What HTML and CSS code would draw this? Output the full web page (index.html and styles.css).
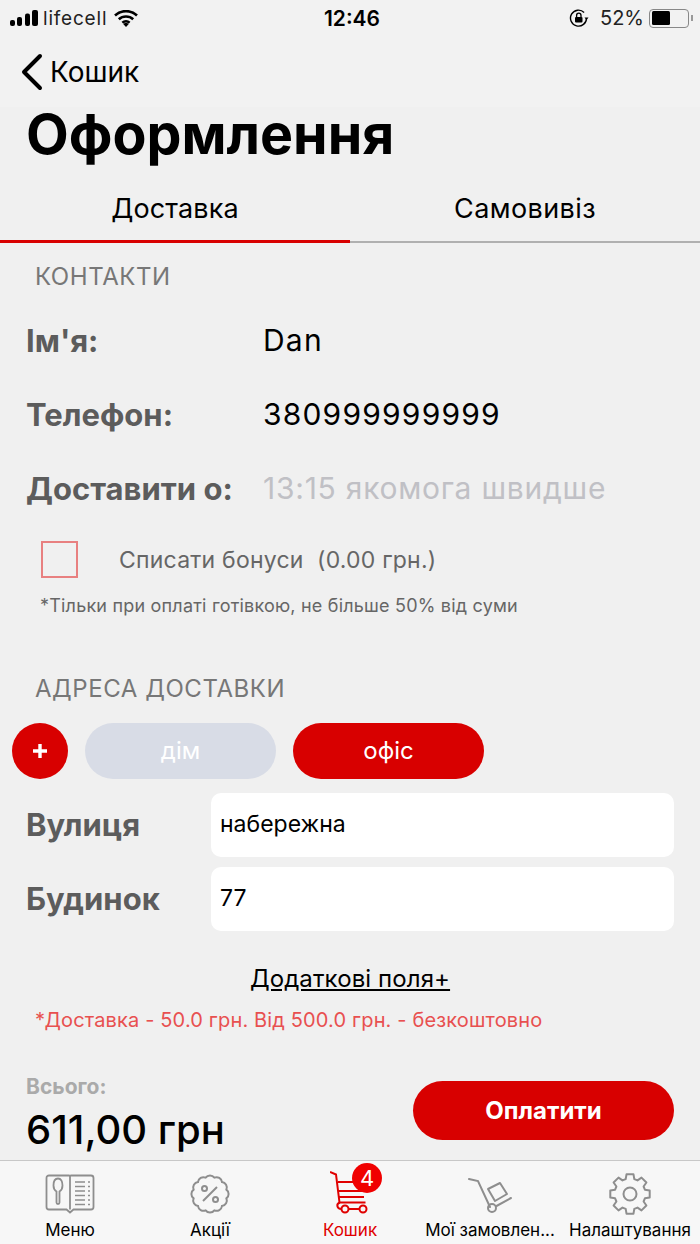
FILE: index.html
```html
<!DOCTYPE html>
<html lang="uk">
<head>
  <meta charset="UTF-8">
  <meta name="viewport" content="width=device-width, initial-scale=1.0">
  <title>Оформлення</title>
  <link rel="stylesheet" href="styles.css">
</head>
<body>
  <!-- Status bar -->
  <div class="status">
    <div class="status-left">
      <svg width="29" height="16" viewBox="0 0 29 16"><rect x="0" y="10" width="5" height="6" rx="2"/><rect x="7" y="7" width="5" height="9" rx="2"/><rect x="15" y="3.5" width="5" height="12.5" rx="2"/><rect x="22" y="0" width="6" height="16" rx="2"/></svg>
      <span class="carrier">lifecell</span>
      <svg class="wifi" width="24" height="17" viewBox="0 0 24 17"><path d="M1 5.5a16 16 0 0 1 22 0M4.8 9.3a10.6 10.6 0 0 1 14.4 0M8.4 12.8a5.4 5.4 0 0 1 7.2 0" fill="none" stroke="#000" stroke-width="2.6"/><path d="M12 17l-2.6-2.8a3.6 3.6 0 0 1 5.2 0z"/></svg>
    </div>
    <div class="status-time">12:46</div>
    <div class="status-right">
      <svg width="20" height="20" viewBox="0 0 20 20"><path d="M17.5 10a8 8 0 1 1-2.4-5.6" fill="none" stroke="#000" stroke-width="1.4"/><path d="M19.5 9.5h-4l2 2.4z"/><rect x="6" y="9" width="7.5" height="5.6" rx="1"/><path d="M7.6 9V7.4a2.2 2.2 0 0 1 4.4 0V9" fill="none" stroke="#000" stroke-width="1.3"/></svg>
      <span class="percent">52%</span>
      <div class="battery"><div class="battery-fill"></div></div>
      <div class="battery-tip"></div>
    </div>
  </div>

  <!-- Nav -->
  <div class="nav">
    <svg width="24" height="38" viewBox="0 0 24 38"><path d="M20 3L4 19l16 16" fill="none" stroke="#000" stroke-width="4" stroke-linecap="round" stroke-linejoin="round"/></svg>
    <span>Кошик</span>
  </div>

  <h1>Оформлення</h1>

  <div class="tabs">
    <div class="tab active">Доставка</div>
    <div class="tab">Самовивіз</div>
  </div>

  <div class="section-title first">КОНТАКТИ</div>
  <div class="info-rows">
    <div class="info-row"><div class="info-label">Ім'я:</div><div class="info-value">Dan</div></div>
    <div class="info-row"><div class="info-label">Телефон:</div><div class="info-value">380999999999</div></div>
    <div class="info-row"><div class="info-label">Доставити о:</div><div class="info-value muted">13:15 якомога швидше</div></div>
  </div>

  <div class="bonus">
    <div class="checkbox"></div>
    <div class="bonus-text">Списати бонуси&nbsp; (0.00 грн.)</div>
  </div>
  <div class="note">*Тільки при оплаті готівкою, не більше 50% від суми</div>

  <div class="section-title">АДРЕСА ДОСТАВКИ</div>
  <div class="pills">
    <div class="plus">
      <svg width="16" height="16" viewBox="0 0 16 16"><path d="M8 1v14M1 8h14" stroke="#fff" stroke-width="3.4"/></svg>
    </div>
    <div class="pill">дім</div>
    <div class="pill active">офіс</div>
  </div>

  <div class="field"><div class="field-label">Вулиця</div><div class="field-input">набережна</div></div>
  <div class="field"><div class="field-label">Будинок</div><div class="field-input">77</div></div>

  <div class="more"><a href="#">Додаткові поля+</a></div>
  <div class="delivery">*Доставка - 50.0 грн. Від 500.0 грн. - безкоштовно</div>

  <div class="total">
    <div>
      <div class="total-label">Всього:</div>
      <div class="total-sum">611,00 грн</div>
    </div>
    <button class="pay">Оплатити</button>
  </div>

  <!-- Tab bar -->
  <div class="tabbar">
    <div class="tabbar-item">
      <svg width="50" height="44" viewBox="0 0 50 44" fill="none" stroke="#8e8e8e" stroke-width="1.8"><path d="M24 4.500H4a2.500 2.500 0 0 0-2.500 2.500v29a2.500 2.500 0 0 0 2.500 2.500h17.500l3.500 3 3.500-3H46a2.500 2.500 0 0 0 2.500-2.500V7A2.500 2.500 0 0 0 46 4.500H26a1 1 0 0 0-1 1v33M25 5.500a1 1 0 0 0-1-1"/><path d="M13 7.500c-3 0-4.500 3-4.500 7 0 3 1.500 5 3 6v11a1.500 1.500 0 0 0 3 0v-11c1.500-1 3-3 3-6 0-4-1.500-7-4.500-7z"/><path d="M30 11h10M30 15.500h10M30 20h10M30 24.500h10M30 29h10M30 33.500h10M43 11h2M43 15.500h2M43 20h2M43 24.500h2M43 29h2M43 33.500h2" stroke-width="1.500"/></svg>
      <span>Меню</span>
    </div>
    <div class="tabbar-item">
      <svg width="40" height="42" viewBox="0 0 40 42" fill="none" stroke="#8e8e8e" stroke-width="2"><path d="M24.400 4.600A5.500 5.500 0 0 1 32 9A5.500 5.500 0 0 1 36.400 16.600A5.500 5.500 0 0 1 36.400 25.400A5.500 5.500 0 0 1 32 33A5.500 5.500 0 0 1 24.400 37.400A5.500 5.500 0 0 1 15.600 37.400A5.500 5.500 0 0 1 8 33A5.500 5.500 0 0 1 3.600 25.400A5.500 5.500 0 0 1 3.600 16.600A5.500 5.500 0 0 1 8 9A5.500 5.500 0 0 1 15.600 4.600A5.500 5.500 0 0 1 24.400 4.600z"/><path d="M13 28l14-14"/><circle cx="14.500" cy="15.500" r="2.500"/><circle cx="25.500" cy="26.500" r="2.500"/></svg>
      <span>Акції</span>
    </div>
    <div class="tabbar-item active">
      <div class="cart">
        <svg width="40" height="44" viewBox="0 0 40 44" fill="none" stroke="#e00000" stroke-width="2"><path d="M0 1l6 2.500 3.500 28h26"/><path d="M8 11h30M8.500 20h28M9 26h25"/><circle cx="15" cy="38" r="3.500"/><circle cx="33" cy="38" r="3.500"/><path d="M10 31.500c-4 1-3.500 6.500 1.500 6.500M18.500 38h11"/></svg>
        <div class="badge">4</div>
      </div>
      <span>Кошик</span>
    </div>
    <div class="tabbar-item">
      <svg width="44" height="42" viewBox="0 0 44 42" fill="none" stroke="#8e8e8e" stroke-width="2"><path d="M1 6l9 2 12 26" stroke-linecap="round"/><circle cx="24" cy="35" r="4"/><path d="M28.500 33l14.500-8" stroke-linecap="round"/><path d="M20 16l12-6 7 11-12 7z" stroke-linejoin="round"/></svg>
      <span>Мої замовлен...</span>
    </div>
    <div class="tabbar-item">
      <svg width="42" height="42" viewBox="0 0 42 42" fill="none" stroke="#8e8e8e" stroke-width="2"><path d="M17.500 1.300h7l.8 4.800 3.200 1.300 4-2.800 4.900 4.900-2.800 4 1.300 3.200 4.800.8v7l-4.800.8-1.300 3.200 2.800 4-4.900 4.900-4-2.800-3.200 1.300-.8 4.800h-7l-.8-4.800-3.200-1.300-4 2.800-4.900-4.900 2.800-4-1.300-3.200-4.800-.8v-7l4.800-.8 1.300-3.200-2.800-4 4.900-4.900 4 2.800 3.200-1.300z" stroke-linejoin="round"/><circle cx="21" cy="21" r="6.500"/></svg>
      <span>Налаштування</span>
    </div>
  </div>
</body>
</html>
```

FILE: styles.css
```css
body {
  margin: 0;
  padding: 0;
  width: 700px;
  height: 1244px;
  overflow: hidden;
  background-color: #f0f0f0;
  color: #000;
  font-family: 'Inter', 'Liberation Sans', sans-serif;
  display: flex;
  flex-direction: column;
}

/* Status bar */
.status {
  height: 36px;
  display: flex;
  justify-content: space-between;
  align-items: center;
  padding: 0 7px 0 10px;
  background: #f2f2f2;
}
.status-left, .status-right {
  display: flex;
  align-items: center;
  width: 190px;
}
.status-right { justify-content: flex-end; }
.carrier {
  font-size: 19px;
  letter-spacing: 0.8px;
  color: #222;
  margin: 0 7px 0 4px;
}
.status-time {
  font-size: 21px;
  font-weight: 600;
  padding-left: 1px;
}
.percent {
  font-size: 20px;
  color: #222;
  margin: 0 5px 0 11px;
}
.battery {
  width: 35px;
  height: 14px;
  border: 1.5px solid #888;
  border-radius: 4px;
  padding: 1.5px;
}
.battery-fill {
  width: 18px;
  height: 100%;
  background: #000;
  border-radius: 1.5px;
}
.battery-tip {
  width: 2px;
  height: 6px;
  background: #999;
  margin-left: 2px;
}

/* Nav */
.nav {
  height: 71px;
  display: flex;
  align-items: center;
  padding-left: 20px;
  gap: 6px;
  font-size: 28px;
  background: #f2f2f2;
}

h1 {
  margin: 0;
  padding-left: 26px;
  height: 68px;
  line-height: 54px;
  font-size: 55.5px;
  font-weight: 700;
}

/* Tabs */
.tabs { display: flex; }
.tab {
  flex: 1;
  height: 66px;
  line-height: 68px;
  text-align: center;
  font-size: 27px;
  letter-spacing: 0.4px;
  border-bottom: 2px solid #b0b0b0;
}
.tab.active {
  height: 65px;
  letter-spacing: 0.1px;
  border-bottom: 3px solid #d80000;
}

.section-title {
  padding-left: 35px;
  margin-top: 57px;
  font-size: 24px;
  letter-spacing: 0.55px;
  line-height: 30px;
  color: #777;
}
.section-title.first { margin-top: 19px; }

/* Contacts */
.info-rows { margin-top: 11px; }
.info-row {
  display: flex;
  align-items: center;
  height: 74px;
  padding-left: 26px;
  font-size: 31px;
}
.info-label {
  width: 237px;
  font-weight: 700;
  color: #5c5c5c;
}
.info-value {
  font-size: 30px;
  letter-spacing: 1.2px;
}
.info-value.muted {
  letter-spacing: 0.75px;
  color: #c0c0c5;
}

.bonus {
  display: flex;
  align-items: center;
  padding-left: 41px;
  margin-top: 16px;
}
.checkbox {
  width: 33px;
  height: 33px;
  border: 2px solid #e88080;
}
.bonus-text {
  margin-left: 41px;
  font-size: 23px;
  letter-spacing: 0.22px;
  color: #666;
}
.note {
  padding-left: 40px;
  margin-top: 17px;
  font-size: 18px;
  letter-spacing: 0.2px;
  line-height: 22px;
  color: #666;
}

/* Address */
.pills {
  display: flex;
  gap: 17px;
  padding-left: 12px;
  margin-top: 19px;
}
.plus {
  width: 56px;
  height: 56px;
  border-radius: 50%;
  background: #d80000;
  display: flex;
  align-items: center;
  justify-content: center;
}
.pill {
  width: 191px;
  height: 56px;
  line-height: 56px;
  border-radius: 28px;
  background: #d8dce6;
  color: #fff;
  text-align: center;
  font-size: 24px;
}
.pill.active { background: #d80000; }

.field {
  display: flex;
  align-items: center;
  padding: 0 26px;
  margin-top: 10px;
}
.pills + .field { margin-top: 14px; }
.field-label {
  width: 185px;
  padding-bottom: 2px;
  font-size: 31px;
  font-weight: 700;
  color: #5c5c5c;
}
.field-input {
  flex: 1;
  height: 64px;
  line-height: 62px;
  padding-left: 9px;
  background: #fff;
  border-radius: 10px;
  font-size: 23px;
}

.more {
  text-align: center;
  margin-top: 33px;
  font-size: 24px;
  letter-spacing: 0.1px;
  line-height: 30px;
}
.more a { color: #000; }
.delivery {
  padding-left: 35px;
  margin-top: 14px;
  font-size: 20px;
  letter-spacing: 0.15px;
  line-height: 24px;
  color: #e85050;
}

/* Total */
.total {
  display: flex;
  justify-content: space-between;
  align-items: flex-start;
  padding: 0 26px;
  margin-top: 43px;
}
.total-label {
  font-size: 21px;
  font-weight: 700;
  line-height: 24px;
  color: #aaa;
}
.total-sum {
  margin-top: 8px;
  font-size: 40px;
  font-weight: 500;
  line-height: 46px;
}
.pay {
  width: 261px;
  height: 59px;
  margin-top: 6px;
  border: none;
  border-radius: 30px;
  background: #d80000;
  color: #fff;
  font-family: inherit;
  font-size: 24px;
  font-weight: 700;
}

/* Tab bar */
.tabbar {
  margin-top: auto;
  height: 83px;
  display: flex;
  background: #f7f7f7;
  border-top: 1px solid #c8c8c8;
}
.tabbar-item {
  flex: 1;
  display: flex;
  flex-direction: column;
  align-items: center;
  justify-content: flex-end;
  padding-bottom: 3px;
  font-size: 17px;
  line-height: 22px;
  white-space: nowrap;
}
.tabbar-item svg { margin-bottom: 4px; }
.tabbar-item.active { color: #e00000; }
.cart {
  position: relative;
  display: flex;
}
.badge {
  position: absolute;
  top: -8px;
  right: -12px;
  width: 30px;
  height: 30px;
  line-height: 30px;
  border-radius: 50%;
  background: #f00000;
  color: #fff;
  text-align: center;
  font-size: 22px;
}
```
